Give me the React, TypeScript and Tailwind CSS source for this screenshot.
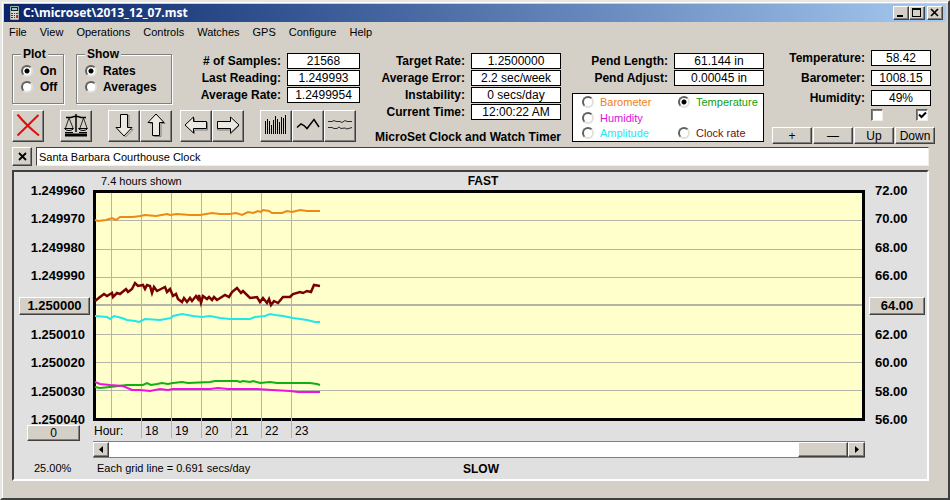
import { type ReactNode } from "react";

// Raised Windows-classic edge, shared by all buttons
const raised =
  "bg-[#d4d0c8] border border-t-white border-l-white border-b-[#404040] border-r-[#404040] shadow-[inset_-1px_-1px_0_#808080]";

const radioStyle =
  "appearance-none shrink-0 w-3 h-3 rounded-full bg-white border-2 border-t-[#606060] border-l-[#606060] border-b-[#e4e1da] border-r-[#e4e1da] checked:bg-[radial-gradient(circle,#000_2px,#fff_3px)]";

const menuItems = ["File", "View", "Operations", "Controls", "Watches", "GPS", "Configure", "Help"];

const leftAxis = [
  "1.249960", "1.249970", "1.249980", "1.249990", "1.250000",
  "1.250010", "1.250020", "1.250030", "1.250040",
];
const rightAxis = ["72.00", "70.00", "68.00", "66.00", "64.00", "62.00", "60.00", "58.00", "56.00"];

const hours = [18, 19, 20, 21, 22, 23];
const gridX = [45, 75, 105, 135, 165, 195];
const gridY = [27, 56, 84, 141, 169, 197];

const series = [
  {
    name: "barometer",
    color: "#f08818",
    points:
      "-1,27 2,28 10,27 16,25 20,27 24,24 30,24 37,24 44,23 49,22 60,23 71,21 74,22 81,21 94,22 104,22 116,20 124,21 134,21 140,20 146,22 152,19 157,20 162,18 165,19 167,17 173,18 176,20 186,20 191,18 196,19 204,17 211,18 224,18",
  },
  {
    name: "clock rate",
    color: "#780000",
    points:
      "-1,108 4,104 8,101 11,103 16,100 17,104 21,100 24,101 30,96 32,99 36,96 39,90 42,93 47,92 49,96 51,92 54,93 56,100 58,94 61,98 65,96 69,94 71,99 74,96 77,103 80,101 82,106 86,109 88,105 91,109 94,105 96,108 100,103 102,106 103,102 105,110 107,103 111,106 113,104 116,107 118,104 121,107 129,102 133,104 136,99 141,95 145,100 147,98 154,105 161,104 164,109 167,105 171,110 173,106 175,112 178,108 182,110 187,104 194,104 197,101 204,99 207,100 211,98 215,99 218,92 224,93",
  },
  {
    name: "amplitude",
    color: "#20e8e8",
    points:
      "-1,123 11,124 14,126 18,123 26,125 31,127 39,128 43,129 49,126 64,127 75,125 77,123 86,121 97,123 106,124 114,123 124,125 134,126 154,126 159,124 169,123 174,121 179,122 187,123 197,125 211,127 219,129 224,129",
  },
  {
    name: "temperature",
    color: "#10b010",
    points:
      "-1,194 4,195 14,194 31,192 47,192 51,190 55,192 61,191 66,190 72,191 77,190 86,189 92,190 114,189 119,188 141,188 144,189 147,188 154,189 157,188 164,190 174,189 181,190 194,190 214,190 221,191 224,192",
  },
  {
    name: "humidity",
    color: "#f010e0",
    points:
      "-1,189 4,191 14,192 27,193 36,197 44,197 54,198 64,196 72,197 77,196 114,196 122,195 132,196 161,196 176,197 194,198 202,199 224,199",
  },
];

interface FieldProps {
  id: string;
  label: string;
  value: string;
  width: string;
}

const Field = ({ id, label, value, width }: FieldProps) => (
  <div className="flex items-center justify-end gap-[6px] h-4">
    <label htmlFor={id} className="font-bold text-xs leading-4 whitespace-nowrap">{label}</label>
    <input
      id={id}
      readOnly
      defaultValue={value}
      className={`${width} h-4 bg-white border border-black text-center text-xs leading-3`}
    />
  </div>
);

interface RadioProps {
  name: string;
  label: string;
  checked?: boolean;
  className?: string;
}

const Radio = ({ name, label, checked, className = "" }: RadioProps) => (
  <label className={`flex items-center h-4 leading-4 whitespace-nowrap ${className}`}>
    <input type="radio" name={name} defaultChecked={checked} className={radioStyle} />
    {label}
  </label>
);

const Group = ({ title, width, children }: { title: string; width: string; children: ReactNode }) => (
  <fieldset
    className={`${width} h-[57px] pl-2 pt-[2px] border border-[#808080] shadow-[1px_1px_0_#fff,inset_1px_1px_0_#fff] font-bold text-xs`}
  >
    <legend className="relative bg-[#d4d0c8] px-[2px] leading-[14px]">{title}</legend>
    {children}
  </fieldset>
);

const ToolButton = ({ label, children }: { label: string; children: ReactNode }) => (
  <button aria-label={label} className={`w-8 h-8 ${raised}`}>
    <svg width="30" height="30" viewBox="1 1 30 30" fill="none" stroke="#000">
      {children}
    </svg>
  </button>
);

const Toolbar = () => (
  <div className="flex">
    <ToolButton label="Delete">
      <path d="M5.500 4.500q9 11 21.500 21M26.500 5 5.500 25.500" stroke="#e01010" strokeWidth="2" />
    </ToolButton>
    <div className="flex ml-4">
      <ToolButton label="Balance">
        <path d="M6 7.500h5l3-1h4l3 1h5M16 4v18" strokeWidth="1.500" />
        <path d="M9 8 5.500 18M9 8l4 10M23.500 8 20 18M23.500 8l3.500 10" strokeWidth=".8" />
        <path d="M4.500 18.500h9q-1 2-4.500 2t-4.500-2zM18.500 18.500h9q-1 2-4.500 2t-4.500-2z" />
        <path d="M5 22.500h22" strokeDasharray="8 6" />
        <path d="M5 23.500h22v3H5z" fill="#000" stroke="none" />
      </ToolButton>
    </div>
    <div className="flex ml-4">
      <ToolButton label="Move down">
        <path d="M14 5.500v14H10l7.500 7.500 7.500-7.500h-4v-14z" stroke="#808080" />
        <path d="M12.500 4.500h7v13h4.500L16 26 8 17.500h4.500z" fill="#ece9e2" />
      </ToolButton>
      <ToolButton label="Move up">
        <path d="M14 26.500v-13h-4L17.500 6l7.500 7.500h-4v13z" stroke="#808080" />
        <path d="M12.500 25.500h7v-13h4.500L16 4l-8 8.500h4.500z" fill="#ece9e2" />
      </ToolButton>
    </div>
    <div className="flex ml-2">
      <ToolButton label="Move left">
        <path d="M27.500 12.500h-13v-4L7 16l7.500 8v-4h13z" stroke="#808080" />
        <path d="M26.500 11.500h-13V7L5 15l8.500 8v-4.500h13z" fill="#ece9e2" />
      </ToolButton>
      <ToolButton label="Move right">
        <path d="M5.500 12.500h13v-4L27 16l-8.500 8v-4h-13z" stroke="#808080" />
        <path d="M5.500 11.500h13V7l8.500 8-8.500 8v-4.500h-13z" fill="#ece9e2" />
      </ToolButton>
    </div>
    <div className="flex ml-4">
      <ToolButton label="Bar plot">
        <path d="M5.500 24V11M7.500 24V9M9.500 24V11M11.500 24V15M13.500 24V10M15.500 24V6M17.500 24V9M19.500 24V12M21.500 24V7M23.500 24V8M25.500 24V5" />
      </ToolButton>
      <ToolButton label="Line plot">
        <path d="M5 17.500 9 14l3 1.500 3 3 7-9 5 7.500" strokeWidth="1.500" />
      </ToolButton>
      <ToolButton label="Trace plot">
        <path
          d="M4 11.500h4l2-1 2 1h4l2 1 3-2 2 1h5M4 17.500h4l2 1h3l2-1.500 2 1.500 4-.500 2 1 5-1.500"
          strokeWidth=".8"
        />
      </ToolButton>
    </div>
  </div>
);

const TitleBar = () => (
  <header className="flex items-center h-[18px] px-[3px] bg-linear-to-r from-[#0a246a] to-[#a6caf0]">
    <svg width="16" height="16" viewBox="0 0 16 16" aria-hidden="true">
      <path d="M3 1h9v14H3z" fill="#d8d8d0" stroke="#202020" strokeWidth=".5" />
      <path d="M4 2h7v4H4z" fill="#123" />
      <path d="M5 3h5v2H5z" fill="#7fd0c8" />
      <path d="M4 8h2v1H4zM7 8h1v1H7zM9 8h2v1H9zM4 10h2v1H4zM7 10h1v1H7zM4 12h2v1H4zM7 12h1v1H7z" fill="#404040" />
      <path d="M9 10h2v3H9z" fill="#c03030" />
    </svg>
    <h1 className="font-['Noto_Sans',sans-serif] font-bold text-xs text-white">C:\microset\2013_12_07.mst</h1>
    <div className="flex ml-auto">
      <button aria-label="Minimize" className={`w-4 h-[14px] ${raised}`}>
        <svg width="14" height="12"><path d="M3 8h6v2H3z" /></svg>
      </button>
      <button aria-label="Maximize" className={`w-4 h-[14px] ${raised}`}>
        <svg width="14" height="12"><path d="M2 1h9v9H2zM3 3v6h7V3z" fillRule="evenodd" /></svg>
      </button>
      <button aria-label="Close" className={`w-4 h-[14px] ml-[2px] ${raised}`}>
        <svg width="14" height="12"><path d="m3 2 7 7M10 2 3 9" stroke="#000" strokeWidth="1.700" /></svg>
      </button>
    </div>
  </header>
);

interface CheckProps {
  label: string;
  checked?: boolean;
}

const Check = ({ label, checked }: CheckProps) => (
  <span className="grid w-3 h-3">
    <input
      type="checkbox"
      aria-label={label}
      defaultChecked={checked}
      className="peer appearance-none col-start-1 row-start-1 w-3 h-3 bg-white border border-t-[#606060] border-l-[#606060] border-b-[#f0eee8] border-r-[#f0eee8] shadow-[inset_1px_1px_0_#808080]"
    />
    <svg
      width="12"
      height="12"
      className="invisible peer-checked:visible pointer-events-none col-start-1 row-start-1"
    >
      <path d="m3 5.500 2.500 2.500L10 3.500" fill="none" stroke="#000" strokeWidth="2" />
    </svg>
  </span>
);

const ControlPanel = () => (
  <section className="flex items-start pl-2 pr-[11px] pt-[5px]">
    {/* Plot settings and toolbar */}
    <div>
      <div className="flex items-start h-[63px]">
        <Group title="Plot" width="w-[52px]">
          <Radio name="plot" label="On" checked className="gap-[7px]" />
          <Radio name="plot" label="Off" className="gap-[7px]" />
        </Group>
        <div className="ml-3">
          <Group title="Show" width="w-24">
            <Radio name="show" label="Rates" checked className="gap-[6px]" />
            <Radio name="show" label="Averages" className="gap-[6px]" />
          </Group>
        </div>
        <div className="flex flex-col gap-px ml-auto -mr-1 pt-[6px]">
          <Field id="samples" label="# of Samples:" value="21568" width="w-[73px]" />
          <Field id="last-reading" label="Last Reading:" value="1.249993" width="w-[73px]" />
          <Field id="average-rate" label="Average Rate:" value="1.2499954" width="w-[73px]" />
        </div>
      </div>
      <Toolbar />
    </div>

    {/* Rate readings */}
    <div className="ml-[18px] pt-[6px] w-[187px] flex flex-col gap-px">
      <Field id="target-rate" label="Target Rate:" value="1.2500000" width="w-[90px]" />
      <Field id="average-error" label="Average Error:" value="2.2 sec/week" width="w-[90px]" />
      <Field id="instability" label="Instability:" value="0 secs/day" width="w-[90px]" />
      <Field id="current-time" label="Current Time:" value="12:00:22 AM" width="w-[90px]" />
      <h2 className="mt-2 text-xs leading-4 font-bold text-right whitespace-nowrap">
        MicroSet Clock and Watch Timer
      </h2>
    </div>

    {/* Pendulum and right-hand scale */}
    <div className="ml-[11px] pt-[6px] w-48 flex flex-col gap-px">
      <Field id="pend-length" label="Pend Length:" value="61.144 in" width="w-[90px]" />
      <Field id="pend-adjust" label="Pend Adjust:" value="0.00045 in" width="w-[90px]" />
      <div className="mt-[6px] h-[49px] pl-[9px] bg-white border border-black grid grid-cols-[96px_1fr] grid-rows-3">
        <Radio name="scale" label="Barometer" className="gap-[6px] text-[#f08020]" />
        <Radio name="scale" label="Temperature" checked className="gap-[6px] text-[#10a010]" />
        <Radio name="scale" label="Humidity" className="gap-[6px] text-[#e010e0] col-span-2" />
        <Radio name="scale" label="Amplitude" className="gap-[6px] text-[#20e8f0]" />
        <Radio name="scale" label="Clock rate" className="gap-[6px] text-[#701010]" />
      </div>
    </div>

    {/* Environment sensors */}
    <div className="ml-auto pt-[3px] w-[163px]">
      <div className="flex flex-col gap-1 pr-1">
        <Field id="temperature" label="Temperature:" value="58.42" width="w-[60px]" />
        <Field id="barometer" label="Barometer:" value="1008.15" width="w-[60px]" />
        <Field id="humidity" label="Humidity:" value="49%" width="w-[60px]" />
      </div>
      <div className="flex justify-end gap-[33px] mt-[3px] pr-[7px]">
        <Check label="Lock left scale" />
        <Check label="Lock right scale" checked />
      </div>
      <div className="grid grid-cols-4 gap-px mt-[6px]">
        <button className={`h-[17px] text-xs leading-3 ${raised}`}>+</button>
        <button className={`h-[17px] text-xs leading-3 ${raised}`}>—</button>
        <button className={`h-[17px] text-xs leading-3 ${raised}`}>Up</button>
        <button className={`h-[17px] text-xs leading-3 ${raised}`}>Down</button>
      </div>
    </div>
  </section>
);

const Plot = () => (
  <div className="col-start-2 row-start-2 min-w-0 bg-[#ffffcc] border-[3px] border-black">
    <svg width="100%" height="225" className="block overflow-visible" role="img" aria-label="Clock rate plot">
      <g stroke="#b4b4a8" shapeRendering="crispEdges">
        {gridY.map((y) => (
          <line key={y} x1="0" x2="100%" y1={y + 0.5} y2={y + 0.5} />
        ))}
        <line x1="0" x2="100%" y1="112" y2="112" strokeWidth="2" />
        <line x1="15.500" x2="15.500" y1="0" y2="225" />
        {gridX.map((x) => (
          <line key={x} x1={x + 0.5} x2={x + 0.5} y1="0" y2="245" />
        ))}
      </g>
      {series.map((s) => (
        <polyline
          key={s.name}
          points={s.points}
          fill="none"
          stroke={s.color}
          strokeWidth={s.name === "clock rate" ? 2.5 : 2}
        />
      ))}
    </svg>
  </div>
);

const ChartPanel = () => (
  <section className="mt-1 ml-2 mr-[17px] bg-[#e0e0e0] border-2 border-t-[#404040] border-l-[#404040] border-b-white border-r-white grid grid-cols-[79px_1fr_62px] grid-rows-[18px_231px_20px_17px_21px]">
    <div className="col-start-2 row-start-1 flex items-center">
      <span className="w-0 pl-2 whitespace-nowrap">7.4 hours shown</span>
      <span className="flex-1 text-center font-bold text-xs">FAST</span>
    </div>

    <div className="col-start-1 row-start-2 -my-[7px] flex flex-col justify-between items-end pr-2 font-bold text-[13px] leading-4">
      {leftAxis.map((v, i) =>
        i === 4 ? (
          <button key={v} className={`w-[71px] h-[18px] -mr-[5px] text-[13px] leading-4 ${raised}`}>{v}</button>
        ) : (
          <span key={v}>{v}</span>
        )
      )}
    </div>
    <Plot />
    <div className="col-start-3 row-start-2 -my-[7px] flex flex-col justify-between items-start pl-[10px] font-bold text-[13px] leading-4">
      {rightAxis.map((v, i) =>
        i === 4 ? (
          <button key={v} className={`w-14 h-[18px] -ml-[6px] text-[13px] leading-4 ${raised}`}>{v}</button>
        ) : (
          <span key={v}>{v}</span>
        )
      )}
    </div>

    <div className="col-start-1 row-start-3 pl-[13px] pt-1">
      <button className={`block w-[53px] h-4 text-xs leading-3 ${raised}`}>0</button>
    </div>
    <div className="col-start-2 row-start-3 flex items-center text-xs">
      <span className="w-[52px] pl-px">Hour:</span>
      {hours.map((h) => (
        <span key={h} className="w-[30px]">{h}</span>
      ))}
    </div>

    {/* Scroll bar */}
    <div className="col-start-2 row-start-4 flex bg-white border-y border-t-[#808080] border-b-[#808080]">
      <button aria-label="Scroll left" className={`w-4 grid place-items-center ${raised}`}>
        <svg width="4" height="7"><path d="M4 0v7L0 3.500z" /></svg>
      </button>
      <div className="flex-1 flex justify-end">
        <div className={`w-[50px] ${raised}`} />
      </div>
      <button aria-label="Scroll right" className={`w-[17px] grid place-items-center ${raised}`}>
        <svg width="4" height="7"><path d="M0 0v7l4-3.500z" /></svg>
      </button>
    </div>

    <span className="col-start-1 row-start-5 pl-5 leading-[21px]">25.00%</span>
    <div className="col-start-2 row-start-5 flex items-center">
      <span className="w-0 pl-1 whitespace-nowrap">Each grid line = 0.691 secs/day</span>
      <span className="flex-1 text-center font-bold text-xs">SLOW</span>
    </div>
  </section>
);

const App = () => {
  return (
    <main className="min-h-screen bg-[#d4d0c8] p-[2px] border-2 border-t-[#e8e6e0] border-l-[#e8e6e0] border-b-[#404040] border-r-[#404040] shadow-[inset_1px_1px_0_#fff] font-['Liberation_Sans',sans-serif] text-[11px] text-black">
      <TitleBar />
      <nav className="flex items-center h-5 pl-[5px] gap-[13px]">
        {menuItems.map((item) => (
          <button key={item}>{item}</button>
        ))}
      </nav>
      <ControlPanel />
      <div className="flex items-start gap-1 mt-[2px] ml-2 mr-[17px]">
        <button aria-label="Clear title" className={`w-5 h-[19px] grid place-items-center ${raised}`}>
          <svg width="9" height="9"><path d="m1 1 7 7M8 1 1 8" stroke="#000" strokeWidth="1.800" /></svg>
        </button>
        <input
          aria-label="Clock name"
          defaultValue="Santa Barbara Courthouse Clock"
          className="flex-1 h-[19px] pl-[2px] bg-white border border-t-[#404040] border-l-[#404040] border-b-[#f0eee8] border-r-[#f0eee8] text-[11px]"
        />
      </div>
      <ChartPanel />
    </main>
  );
};

export default App;
